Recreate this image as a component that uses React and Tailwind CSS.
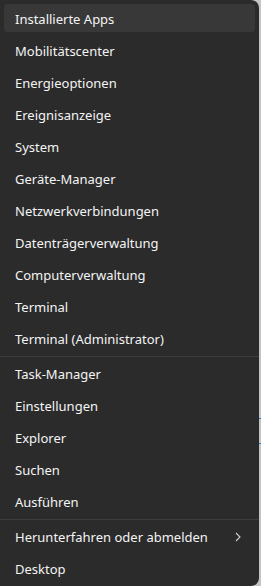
const groups = [
  [
    'Installierte Apps',
    'Mobilitätscenter',
    'Energieoptionen',
    'Ereignisanzeige',
    'System',
    'Geräte-Manager',
    'Netzwerkverbindungen',
    'Datenträgerverwaltung',
    'Computerverwaltung',
    'Terminal',
    'Terminal (Administrator)',
  ],
  ['Task-Manager', 'Einstellungen', 'Explorer', 'Suchen', 'Ausführen'],
  ['Herunterfahren oder abmelden', 'Desktop'],
];

function MenuItem({label, active, submenu}) {
  return (
    <div
      className={
        'mx-1 mb-1 flex h-7 items-center justify-between rounded-[4px] pl-[11px] pr-[14px] pt-[3px] ' +
        (active ? 'bg-[#383838]' : '')
      }
    >
      <span>{label}</span>
      {submenu && (
        <svg width="6" height="10" viewBox="0 0 6 10" className="-mt-[2px]">
          <path d="M1 1l4 4-4 4" fill="none" stroke="#cfcfcf" strokeWidth="1.1" />
        </svg>
      )}
    </div>
  );
}

export default function App() {
  return (
    <div className="flex h-[586px] w-[261px] bg-[#c4c4c4]">
      <div
        className="flex h-full w-[259px] flex-col rounded-r-lg bg-[#2b2b2b] pt-1 text-[13px] text-[#f4f4f4]"
        style={{fontFamily: '"Noto Sans", sans-serif'}}
      >
        {groups.map((items, g) => (
          <div key={g}>
            {g > 0 && <div className="mb-[2px] h-px bg-[#3d3d3d]" />}
            {items.map((label) => (
              <MenuItem
                key={label}
                label={label}
                active={label === 'Installierte Apps'}
                submenu={label === 'Herunterfahren oder abmelden'}
              />
            ))}
          </div>
        ))}
      </div>
      {/* background strip behind the menu */}
      <div className="relative flex-1">
        <div className="absolute left-0 top-[418px] h-px w-full bg-[#2a7fd4]" />
        <div className="absolute left-0 top-[443px] h-px w-full bg-[#2a7fd4]" />
      </div>
    </div>
  );
}
